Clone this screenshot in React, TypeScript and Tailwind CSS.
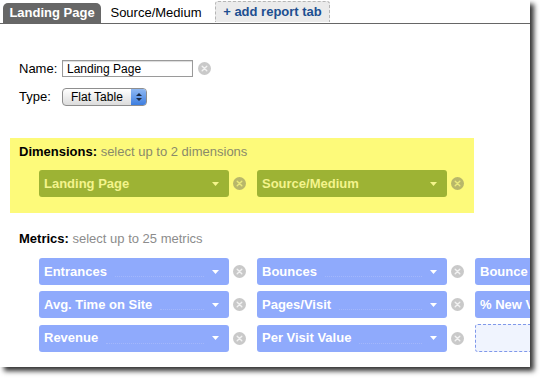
import React from "react";

const font = { fontFamily: '"Liberation Sans", Arial, sans-serif' };

function ClearIcon({ dim }: { dim?: boolean }) {
  return (
    <svg width="13" height="13" viewBox="0 0 13 13">
      <circle cx="6.5" cy="6.5" r="6.5" fill={dim ? "#b8b76a" : "#c9c9c9"} />
      <path d="M4.2 4.2l4.6 4.6M8.8 4.2l-4.6 4.6" stroke={dim ? "#e9e97c" : "#f2f2f2"} strokeWidth="1.4" strokeLinecap="round" />
    </svg>
  );
}

function Pill({ label, kind }: { label: string; kind: "dim" | "metric" }) {
  const isDim = kind === "dim";
  return (
    <div
      className={`relative flex items-center h-[27px] w-[190px] shrink-0 rounded-[3px] pl-[5px] pr-[10px] text-[13px] font-bold ${
        isDim ? "bg-[#9db334] text-[#f4f48c]" : "bg-[#8faafc] text-white"
      }`}
    >
      <span className="whitespace-nowrap">{label}</span>
      {!isDim && (
        <span className="flex-1 mx-[8px] mt-[10px] border-b border-dotted border-[#a3b7fb]" />
      )}
      {isDim && <span className="flex-1" />}
      <svg width="7" height="4" viewBox="0 0 7 4" className="ml-auto">
        <path d="M0 0h7L3.5 4z" fill={isDim ? "#f4f48c" : "#ffffff"} />
      </svg>
    </div>
  );
}

function Slot({ label, kind, dim }: { label: string; kind: "dim" | "metric"; dim?: boolean }) {
  return (
    <div className="flex items-center shrink-0">
      <Pill label={label} kind={kind} />
      <div className="ml-[4px] mr-[11px] flex">
        <ClearIcon dim={dim} />
      </div>
    </div>
  );
}

export default function App() {
  const rows = [
    ["Entrances", "Bounces", "Bounce Rate"],
    ["Avg. Time on Site", "Pages/Visit", "% New Visits"],
    ["Revenue", "Per Visit Value", ""],
  ];

  return (
    <div className="w-[540px] h-[379px] bg-white overflow-hidden" style={font}>
      <div className="w-[530px] h-[367px] bg-white overflow-hidden shadow-[4px_4px_5px_rgba(0,0,0,0.8)]">
        {/* Tabs */}
        <div className="flex items-end h-[24px] border-b border-[#666] pl-[3px]">
          <div className="h-[20px] w-[98px] bg-[#676767] rounded-t-[5px] flex items-center justify-center text-white text-[13px] font-bold">
            Landing Page
          </div>
          <div className="h-[20px] w-[110px] flex items-center justify-center text-[13px] text-black">
            Source/Medium
          </div>
          <div className="ml-[4px] mb-[1px] h-[21px] w-[115px] bg-[#ebebeb] border border-dashed border-b-0 border-[#b5b5b5] rounded-t-[3px] flex items-center justify-center text-[13px] font-bold text-[#1d4f91]">
            + add report tab
          </div>
        </div>

        {/* Name / Type */}
        <div className="pl-[19px] mt-[36px] text-[13px] text-black">
          <div className="flex items-center h-[17px]">
            <span className="w-[43px]">Name:</span>
            <div className="w-[131px] h-[17px] border border-[#9a9a9a] shadow-[inset_0_1px_1px_rgba(0,0,0,0.15)] flex items-center pl-[4px] text-[12px]">
              Landing Page
            </div>
            <div className="ml-[5px] flex">
              <ClearIcon />
            </div>
          </div>
          <div className="flex items-center h-[18px] mt-[11px]">
            <span className="w-[43px]">Type:</span>
            <div className="w-[85px] h-[18px] rounded-[4px] border border-[#8e8e8e] bg-gradient-to-b from-[#ffffff] to-[#dcdcdc] flex items-center overflow-hidden text-[12px]">
              <span className="flex-1 pl-[8px]">Flat Table</span>
              <div className="w-[15px] h-full bg-gradient-to-b from-[#8fb8f2] to-[#3d7ee0] flex flex-col items-center justify-center gap-[2px]">
                <svg width="6" height="3" viewBox="0 0 6 3"><path d="M0 3h6L3 0z" fill="#1b2a44" /></svg>
                <svg width="6" height="3" viewBox="0 0 6 3"><path d="M0 0h6L3 3z" fill="#1b2a44" /></svg>
              </div>
            </div>
          </div>
        </div>

        {/* Dimensions */}
        <div className="ml-[10px] mt-[32px] w-[464px] h-[75px] bg-[#fdfa7a] pt-[5px] pl-[9px]">
          <div className="text-[13px] leading-[17px]">
            <span className="font-bold text-black">Dimensions:</span>{" "}
            <span className="text-[#8a8a6a]">select up to 2 dimensions</span>
          </div>
          <div className="flex mt-[10px] pl-[20px]">
            <Slot label="Landing Page" kind="dim" dim />
            <Slot label="Source/Medium" kind="dim" dim />
          </div>
        </div>

        {/* Metrics */}
        <div className="pl-[19px] mt-[17px]">
          <div className="text-[13px] leading-[17px]">
            <span className="font-bold text-black">Metrics:</span>{" "}
            <span className="text-[#8c8c8c]">select up to 25 metrics</span>
          </div>
          <div className="flex flex-col gap-[6px] mt-[11px] pl-[20px]">
            {rows.map((r, i) => (
              <div key={i} className="flex">
                <Slot label={r[0]} kind="metric" />
                <Slot label={r[1]} kind="metric" />
                {r[2] ? (
                  <Pill label={r[2]} kind="metric" />
                ) : (
                  <div className="w-[190px] h-[28px] shrink-0 rounded-[3px] border border-dashed border-[#7f98ea] bg-[#f0f4fe]" />
                )}
              </div>
            ))}
          </div>
        </div>
      </div>
    </div>
  );
}
